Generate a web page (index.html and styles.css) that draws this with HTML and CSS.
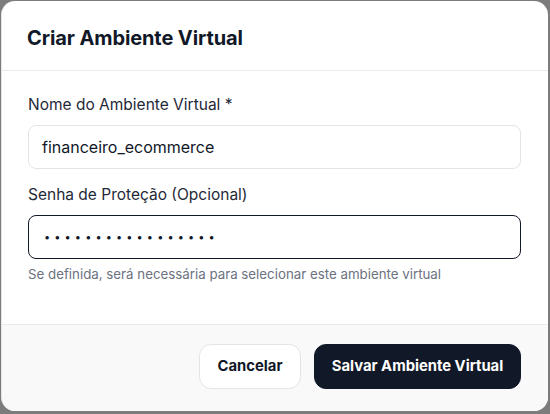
FILE: index.html
```html
<!DOCTYPE html>
<html lang="pt">
<head>
<meta charset="utf-8">
<title>Criar Ambiente Virtual</title>
<link rel="stylesheet" href="styles.css">
</head>
<body>
<div class="dialog">
  <div class="dialog-header">
    <h2 class="dialog-title">Criar Ambiente Virtual</h2>
  </div>
  <div class="dialog-body">
    <div class="field">
      <label class="field-label">Nome do Ambiente Virtual *</label>
      <div class="input">financeiro_ecommerce</div>
    </div>
    <div class="field">
      <label class="field-label">Senha de Proteção (Opcional)</label>
      <div class="input input-focused"><span class="dots">•••••••••••••••••</span></div>
      <p class="hint">Se definida, será necessária para selecionar este ambiente virtual</p>
    </div>
  </div>
  <div class="dialog-footer">
    <button class="btn btn-secondary">Cancelar</button>
    <button class="btn btn-primary">Salvar Ambiente Virtual</button>
  </div>
</div>
</body>
</html>
```

FILE: styles.css
```css
* { box-sizing: border-box; }
html, body { margin: 0; padding: 0; }
body {
  width: 550px;
  height: 414px;
  background: #7c7c7c;
  font-family: Inter, "Noto Sans", sans-serif;
  padding: 1px 2px 3px 1px;
  overflow: hidden;
}
.dialog {
  width: 547px;
  height: 410px;
  background: #ffffff;
  border-radius: 14px;
  overflow: hidden;
  display: flex;
  flex-direction: column;
  border-left: 1px solid #e4e4e4;
}
.dialog-header {
  padding: 27px 26px 21px 25px;
  border-bottom: 1px solid #ebebeb;
}
.dialog-title {
  margin: 0;
  font-size: 20px;
  line-height: 21px;
  font-weight: 700;
  color: #111827;
  letter-spacing: -0.1px;
}
.dialog-body {
  flex: 1;
  padding: 24px 27px 0 26px;
  display: flex;
  flex-direction: column;
  gap: 16px;
}
.field { display: flex; flex-direction: column; }
.field-label {
  font-size: 15.5px;
  line-height: 20px;
  color: #1f2937;
  margin-bottom: 10px;
}
.input {
  height: 44px;
  border: 1px solid #e2e4e8;
  border-radius: 8px;
  padding: 0 13px;
  display: flex;
  align-items: center;
  font-size: 16px;
  color: #111827;
}
.input-focused {
  border: 1.5px solid #111827;
}
.dots {
  font-size: 11px;
  letter-spacing: 4.1px;
  padding-left: 2px;
}
.hint {
  margin: 7px 0 0;
  font-size: 13.3px;
  line-height: 16px;
  color: #6b7280;
}
.dialog-footer {
  height: 87px;
  background: #f9f9fa;
  border-top: 1px solid #ebebeb;
  padding: 0 27px 4px;
  display: flex;
  justify-content: flex-end;
  align-items: center;
  gap: 13px;
}
.btn {
  height: 45px;
  border-radius: 12px;
  font-family: Inter, "Noto Sans", sans-serif;
  font-size: 14.8px;
  font-weight: 700;
  padding: 0 10px;
  cursor: pointer;
}
.btn-secondary {
  background: #ffffff;
  border: 1px solid #e2e4e8;
  color: #111827;
  width: 102px;
}
.btn-primary {
  background: #111827;
  border: 1px solid #111827;
  color: #ffffff;
  width: 207px;
}
```
